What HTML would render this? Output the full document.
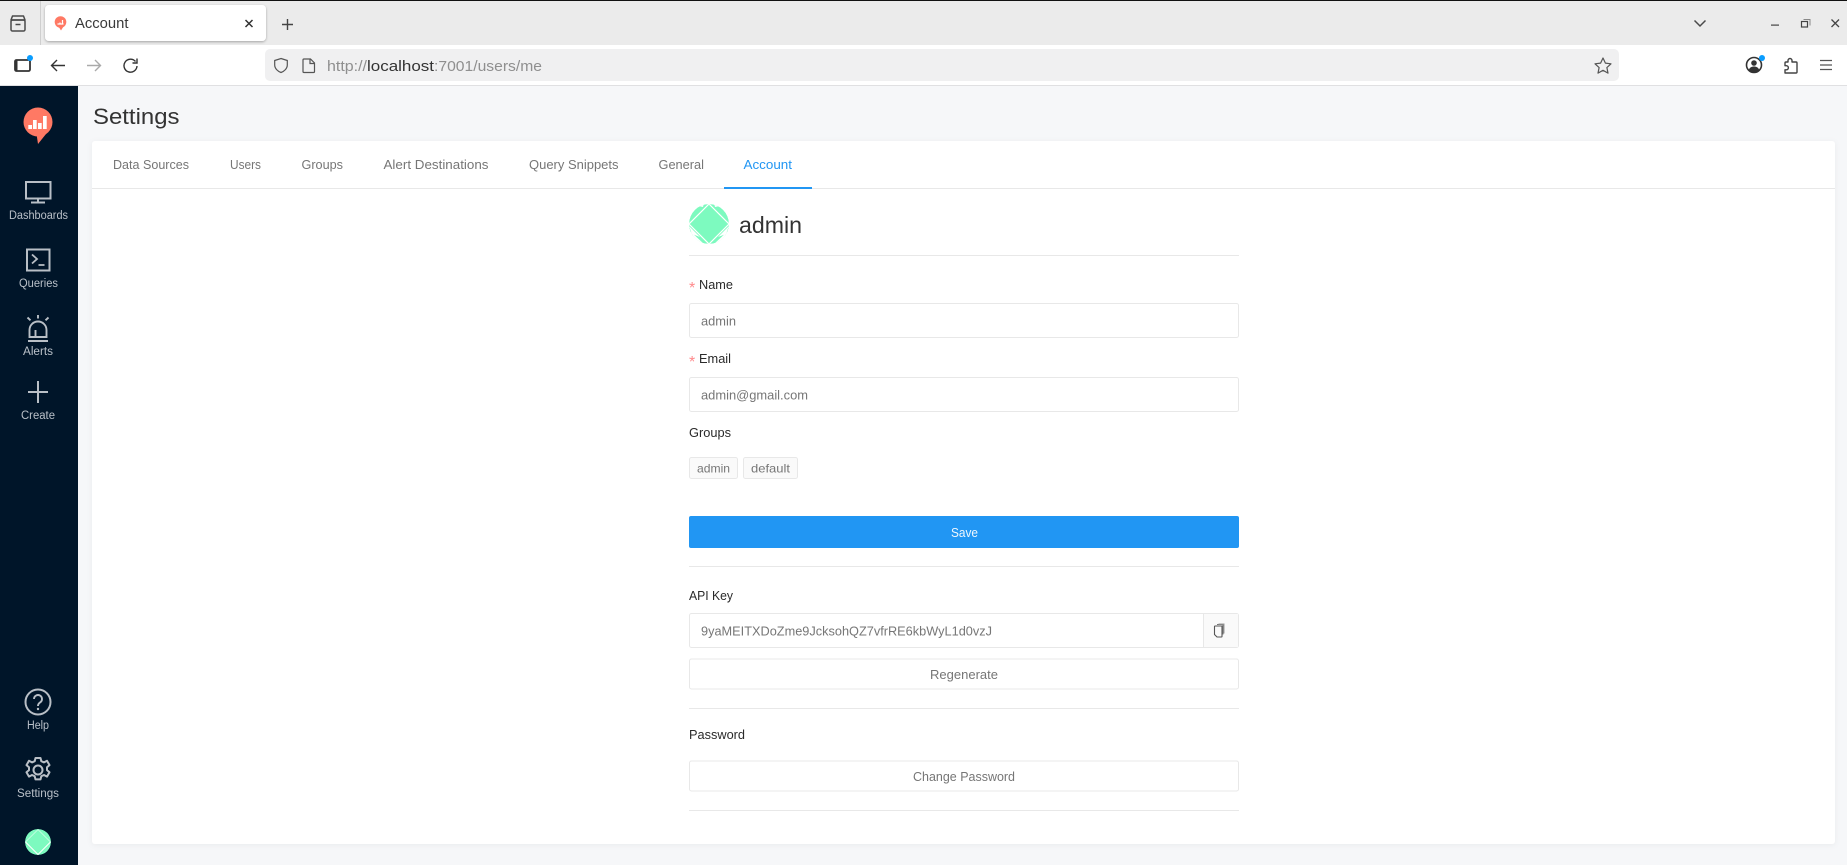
<!DOCTYPE html>
<html lang="en">
<head>
<meta charset="utf-8">
<title>Account</title>
<style>
html,body{margin:0;padding:0;width:1847px;height:865px;overflow:hidden;background:#f6f7f9}
svg{display:block;position:absolute;left:0;top:0}
text{font-family:"Liberation Sans",sans-serif;white-space:pre}
.tab{font-size:13px;fill:#767676}
.lab{font-size:13px;fill:#2a2a2a}
.val{font-size:13px;fill:#767676}
.nav{font-size:11.5px;fill:#b9c0c8}
.ic{fill:none;stroke:#b9bfc6;stroke-width:2}
.br{fill:none;stroke:#4a4a4a;stroke-width:1.5}
.box{fill:#fff;stroke:#e8e8e8;stroke-width:1}
.div{fill:#e8e8e8}
</style>
</head>
<body>
<svg width="1847" height="865" viewBox="0 0 1847 865" xmlns="http://www.w3.org/2000/svg">
<defs>
<filter id="sh" x="-5%" y="-5%" width="110%" height="110%"><feDropShadow dx="0" dy="1" stdDeviation="3" flood-color="#000" flood-opacity=".05"/></filter>
<filter id="ts" x="-10%" y="-20%" width="120%" height="150%"><feDropShadow dx="0" dy="1" stdDeviation="1.2" flood-color="#000" flood-opacity=".3"/></filter>
<clipPath id="c1"><circle cx="709" cy="224" r="20"/></clipPath>
<clipPath id="c2"><circle cx="38" cy="842" r="13"/></clipPath>
</defs>

<!-- browser chrome -->
<rect width="1847" height="45" fill="#ebebeb"/>
<rect width="1847" height="1" fill="#111"/>
<rect y="45" width="1847" height="40" fill="#fff"/>
<rect y="85" width="1847" height="1" fill="#e0e0e2"/>
<rect x="40" y="1" width="1" height="44" fill="#cfcfcf"/>
<g class="br" stroke-linejoin="round">
<rect x="11" y="20" width="14" height="11" rx="1.5"/>
<path d="M12.5 16h11l1.5 4h-14z"/>
<path d="M15.5 24.5h5"/>
</g>
<rect x="45" y="5" width="221" height="36" rx="4" fill="#fff" filter="url(#ts)"/>
<circle cx="60.5" cy="22" r="5.8" fill="#ff7964"/>
<path d="M58.5 26.5l2.5 4 2.5-4z" fill="#ff7964"/>
<path d="M57.5 24h6M62.5 20v4M60 22.5v1.5" stroke="#fff" stroke-width="1.2" fill="none"/>
<text x="75" y="28" font-size="15" fill="#3a3a3a" textLength="53.5" lengthAdjust="spacingAndGlyphs">Account</text>
<path d="M245.5 20l7 7M252.5 20l-7 7" stroke="#333" stroke-width="1.5" fill="none"/>
<path d="M287.5 19v11M282 24.5h11" stroke="#444" stroke-width="1.4" fill="none"/>
<path d="M1694.5 20.5l5.500 5.500 5.500-5.500" class="br"/>
<rect x="1771" y="24.5" width="8" height="1.2" fill="#444"/>
<path d="M1803.5 19.5h6.500v6" fill="none" stroke="#888" stroke-width="1"/>
<rect x="1801.5" y="21.5" width="6" height="5.500" fill="none" stroke="#444" stroke-width="1.2"/>
<path d="M1831.5 19.5l7.500 7.500M1839 19.5l-7.500 7.500" fill="none" stroke="#444" stroke-width="1.3"/>

<!-- toolbar -->
<rect x="15" y="60" width="15" height="11" rx="1.5" fill="none" stroke="#333" stroke-width="1.8"/>
<rect x="15" y="60" width="2.5" height="11" fill="#333"/>
<circle cx="30" cy="58" r="3" fill="#0a9dff"/>
<path d="M65 65.5H52M57 60l-5.500 5.500L57 71" fill="none" stroke="#333" stroke-width="1.4"/>
<path d="M87 65.5h13M95 60l5.500 5.500L95 71" fill="none" stroke="#aaa" stroke-width="1.4"/>
<path d="M135.5 61.500a6.500 6.500 0 1 0 1.500 4.500M137 58.500v4.500h-4.500" fill="none" stroke="#333" stroke-width="1.4"/>
<rect x="265" y="49" width="1354" height="32" rx="5" fill="#f0f0f1"/>
<path d="M281 58.500l6.300 2v4.500c0 3.500-3 6.300-6.300 7.500-3.300-1.200-6.300-4-6.300-7.500v-4.500z" fill="none" stroke="#555" stroke-width="1.2"/>
<path d="M304 59h6.500l4 4v8.500a1 1 0 0 1-1 1h-9.500a1 1 0 0 1-1-1V60a1 1 0 0 1 1-1z" fill="none" stroke="#555" stroke-width="1.2"/>
<path d="M310 59v4.500h4.500" fill="none" stroke="#555" stroke-width="1.2"/>
<text y="71" font-size="15"><tspan x="327" fill="#8f8f8f" textLength="40" lengthAdjust="spacingAndGlyphs">http://</tspan><tspan x="367" fill="#333" textLength="67" lengthAdjust="spacingAndGlyphs">localhost</tspan><tspan x="434" fill="#8f8f8f" textLength="108" lengthAdjust="spacingAndGlyphs">:7001/users/me</tspan></text>
<path d="M1603 58l2.400 5.100 5.600.7-4.100 3.800 1.100 5.500-5-2.800-5 2.800 1.100-5.500-4.100-3.800 5.600-.7z" fill="none" stroke="#555" stroke-width="1.2" stroke-linejoin="round"/>
<circle cx="1754" cy="65" r="7.500" fill="none" stroke="#333" stroke-width="1.600"/>
<circle cx="1754" cy="63" r="2.800" fill="#333"/>
<path d="M1748.5 70.500c1-3 3-4 5.500-4s4.500 1 5.500 4c-1.500 1.500-3.500 2-5.500 2s-4-.5-5.500-2z" fill="#333"/>
<circle cx="1762" cy="58" r="3" fill="#0a9dff"/>
<path d="M1790 58.500a2 2 0 0 1 2 2V62h4a1 1 0 0 1 1 1v9a1 1 0 0 1-1 1h-11v-3.200h1.300a2 2 0 0 0 0-4.100H1785V63a1 1 0 0 1 1-1h2v-1.500a2 2 0 0 1 2-2z" fill="none" stroke="#444" stroke-width="1.4" stroke-linejoin="round"/>
<path d="M1820 60.500h12M1820 65h12M1820 69.500h12" stroke="#555" stroke-width="1.2" fill="none"/>

<!-- sidebar -->
<rect y="86" width="78" height="779" fill="#001529"/>
<circle cx="38" cy="122" r="14.500" fill="#ff7964"/>
<path d="M36.5 134l1.500 10 8-10z" fill="#ff7964"/>
<rect x="28.3" y="125" width="3.700" height="4" fill="#fff"/>
<rect x="33" y="120" width="3.700" height="9" fill="#fff"/>
<rect x="38" y="123" width="3.700" height="6" fill="#fff"/>
<rect x="43" y="116" width="3.700" height="13" fill="#fff"/>

<g class="ic">
<rect x="26" y="182" width="24.500" height="16.500"/>
<path d="M38 198.500v4M31 202.500h14"/>
<rect x="27" y="249.500" width="22.500" height="21"/>
<path d="M32 254.500l5 4.500-5 4.500M38.500 265h6" stroke-width="1.800"/>
<path d="M29.500 337v-7a8.500 8.500 0 0 1 17 0v7zM28 341h20M38 315v3.500M27.500 317.500l3 2.800M48.500 317.500l-3 2.800M35.500 337v-7" stroke-width="1.900"/>
<path d="M38 381v22M28 392h20"/>
<circle cx="38" cy="702" r="12.500"/>
<path d="M34 699a4 4 0 1 1 6 3.500c-1.500 1-2 1.800-2 3.500" stroke-width="1.900"/>
<circle cx="38" cy="770" r="4.500"/>
<path d="M35.500 758h5l.8 3.200 2.700 1.200 3-1.600 2.500 4.300-2.500 2.200v2.800l2.500 2.200-2.500 4.300-3-1.600-2.700 1.200-.8 3.200h-5l-.8-3.200-2.700-1.200-3 1.600-2.500-4.300 2.500-2.200v-2.800l-2.500-2.200 2.500-4.300 3 1.600 2.700-1.200z" stroke-linejoin="round"/>
</g>
<circle cx="38" cy="709" r="1.200" fill="#b9bfc6"/>
<text class="nav" x="9" y="219" textLength="59" lengthAdjust="spacingAndGlyphs">Dashboards</text>
<text class="nav" x="19" y="287" textLength="39" lengthAdjust="spacingAndGlyphs">Queries</text>
<text class="nav" x="23" y="355" textLength="30" lengthAdjust="spacingAndGlyphs">Alerts</text>
<text class="nav" x="21" y="419" textLength="34" lengthAdjust="spacingAndGlyphs">Create</text>
<text class="nav" x="27" y="729" textLength="22" lengthAdjust="spacingAndGlyphs">Help</text>
<text class="nav" x="17" y="797" textLength="42" lengthAdjust="spacingAndGlyphs">Settings</text>
<g clip-path="url(#c2)">
<circle cx="38" cy="842" r="13" fill="#7dfabf"/>
<path d="M25.500 842L38 854.500 50.500 842" fill="none" stroke="#fff" stroke-width="1"/>
<path d="M25.500 842L38 829.500 50.500 842" fill="none" stroke="#fff" stroke-width=".6" stroke-opacity=".8"/>
</g>

<!-- main -->
<text x="93" y="124" font-size="22" fill="#333" textLength="86.500" lengthAdjust="spacingAndGlyphs">Settings</text>
<rect x="92" y="141" width="1743" height="703" rx="3" fill="#fff" filter="url(#sh)"/>
<rect x="92" y="188" width="1743" height="1" fill="#e8e8e8"/>
<text class="tab" x="113" y="169" textLength="76" lengthAdjust="spacingAndGlyphs">Data Sources</text>
<text class="tab" x="230" y="169" textLength="31" lengthAdjust="spacingAndGlyphs">Users</text>
<text class="tab" x="301.5" y="169" textLength="41.500" lengthAdjust="spacingAndGlyphs">Groups</text>
<text class="tab" x="383.5" y="169" textLength="105" lengthAdjust="spacingAndGlyphs">Alert Destinations</text>
<text class="tab" x="529" y="169" textLength="89.500" lengthAdjust="spacingAndGlyphs">Query Snippets</text>
<text class="tab" x="658.5" y="169" textLength="45.500" lengthAdjust="spacingAndGlyphs">General</text>
<text class="tab" x="743.5" y="169" textLength="48.500" lengthAdjust="spacingAndGlyphs" style="fill:#2196f3">Account</text>
<rect x="724" y="187" width="88" height="2" fill="#2196f3"/>

<!-- profile header -->
<g clip-path="url(#c1)">
<circle cx="709" cy="224" r="20" fill="#7dfabf"/>
<path d="M698 206l6-3-1 4zM720 206l-6-3 1 4z" fill="#fff"/>
<path d="M721 205l8 13-4-9zM697 205l-8 13 4-9z" fill="#fff"/>
<path d="M690 231l14 13-9-5zM728 231l-14 13 9-5z" fill="#fff"/>
<path d="M689 226l11 11-8-3zM729 226l-11 11 8-3z" fill="#fff"/>
<path d="M709 204l-20 20 20 20 20-20z" fill="#7dfabf" stroke="#fff" stroke-width="1.200"/>
</g>
<text x="739" y="233" font-size="23" fill="#333" textLength="63" lengthAdjust="spacingAndGlyphs">admin</text>
<rect class="div" x="689" y="255" width="550" height="1"/>

<!-- name -->
<text x="689" y="293" font-size="16" fill="#ff8a8c">*</text>
<text class="lab" x="699" y="289" textLength="34" lengthAdjust="spacingAndGlyphs">Name</text>
<rect class="box" x="689.5" y="303.5" width="549" height="34" rx="2"/>
<text class="val" x="701" y="325.5" textLength="35" lengthAdjust="spacingAndGlyphs">admin</text>

<!-- email -->
<text x="689" y="367" font-size="16" fill="#ff8a8c">*</text>
<text class="lab" x="699" y="363" textLength="32" lengthAdjust="spacingAndGlyphs">Email</text>
<rect class="box" x="689.5" y="377.5" width="549" height="34" rx="2"/>
<text class="val" x="701" y="399.5" textLength="107" lengthAdjust="spacingAndGlyphs">admin@gmail.com</text>

<!-- groups -->
<text class="lab" x="689" y="437" textLength="42" lengthAdjust="spacingAndGlyphs">Groups</text>
<rect x="689.5" y="457.5" width="48" height="21" rx="2" fill="#fafafa" stroke="#e8e8e8"/>
<text x="697" y="472.5" font-size="12" fill="#767676" textLength="33" lengthAdjust="spacingAndGlyphs">admin</text>
<rect x="743.5" y="457.5" width="54" height="21" rx="2" fill="#fafafa" stroke="#e8e8e8"/>
<text x="751" y="472.5" font-size="12" fill="#767676" textLength="39" lengthAdjust="spacingAndGlyphs">default</text>

<!-- save -->
<rect x="689" y="516" width="550" height="32" rx="2" fill="#2196f3"/>
<text x="951" y="537" font-size="13" fill="#fff" fill-opacity=".92" textLength="27" lengthAdjust="spacingAndGlyphs">Save</text>
<rect class="div" x="689" y="566" width="550" height="1"/>

<!-- api key -->
<text class="lab" x="689" y="600" textLength="44" lengthAdjust="spacingAndGlyphs">API Key</text>
<rect class="box" x="689.5" y="613.5" width="549" height="34" rx="2"/>
<rect x="1203" y="614" width="35" height="33" fill="#fafafa"/>
<rect x="1203" y="614" width="1" height="33" fill="#e8e8e8"/>
<text class="val" x="701" y="635.5" textLength="291" lengthAdjust="spacingAndGlyphs">9yaMEITXDoZme9JcksohQZ7vfrRE6kbWyL1d0vzJ</text>
<path d="M1215.500 626h6.500v10.500a.5.500 0 0 1-.5.500h-4.500l-2.500-2.500v-8a.5.500 0 0 1 .5-.5z" fill="none" stroke="#555" stroke-width="1.100"/>
<path d="M1217 624.500h6v10" fill="none" stroke="#777" stroke-width="1"/>
<path d="M1218.500 624h5.500v9.500" fill="none" stroke="#999" stroke-width="1"/>
<rect class="box" x="689.5" y="659" width="549" height="30" rx="2"/>
<text class="val" x="930" y="679" textLength="68" lengthAdjust="spacingAndGlyphs">Regenerate</text>
<rect class="div" x="689" y="708" width="550" height="1"/>

<!-- password -->
<text class="lab" x="689" y="739" textLength="56" lengthAdjust="spacingAndGlyphs">Password</text>
<rect class="box" x="689.5" y="761" width="549" height="30" rx="2"/>
<text class="val" x="913" y="781" textLength="102" lengthAdjust="spacingAndGlyphs">Change Password</text>
<rect class="div" x="689" y="810" width="550" height="1"/>
</svg>
</body>
</html>
